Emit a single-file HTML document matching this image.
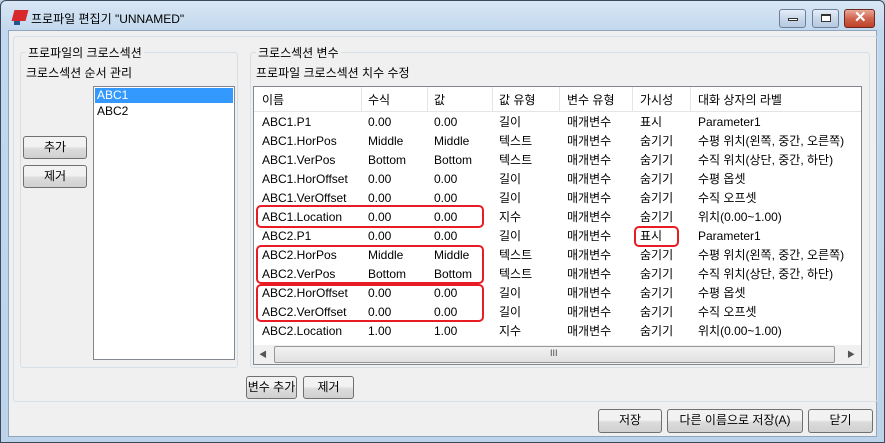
<!DOCTYPE html>
<html><head><meta charset="utf-8"><style>
*{box-sizing:border-box;margin:0;padding:0}
body{width:885px;height:443px;overflow:hidden;background:#bcd3ea;font-family:"Liberation Sans","Noto Sans CJK KR",sans-serif;font-size:12px;color:#000;position:relative}
.a{position:absolute}
.win{left:0;top:0;width:885px;height:443px;border:1px solid #3a4a5c;border-radius:6px 6px 0 0;background:linear-gradient(#d9e6f4,#c2d8ee 30px,#bcd3ea)}
.body{left:8px;top:30px;width:869px;height:407px;background:#f0f0f0;border:1px solid #8fa6bf}
.grp{border:1px solid #d5dfe5;border-radius:3px}
.lbl{background:#f0f0f0;padding:0 2px;white-space:nowrap}
.btn{border:1px solid #707070;border-radius:3px;background:linear-gradient(#f2f2f2 45%,#dcdcdc 55%,#d0d0d0);text-align:center;line-height:20px;white-space:nowrap}
.tb{top:9px;height:19px;border:1px solid #6b7f99;border-radius:3px;background:linear-gradient(#e6eef8,#c9d8ea 50%,#b6c9e0)}
.row{position:absolute;left:0;height:19px;line-height:19px;white-space:nowrap;width:608px}
.row span{position:absolute}
.red{position:absolute;border:2px solid #e81c24;border-radius:5px}
</style></head><body>
<div class="a win"></div>
<div class="a" style="left:13px;top:10px;width:14px;height:11px;background:#d8282c;transform:skewX(-15deg)"></div>
<div class="a" style="left:14px;top:21px;width:6px;height:4px;background:#24568f"></div>
<div class="a" style="left:31px;top:10px;font-size:12px">프로파일 편집기  "UNNAMED"</div>
<div class="a tb" style="left:779px;width:27px"><div class="a" style="left:8px;top:8px;width:10px;height:3px;border:1px solid #333;background:#fff"></div></div>
<div class="a tb" style="left:812px;width:27px"><div class="a" style="left:8px;top:4px;width:10px;height:8px;border:1px solid #333;border-top-width:2px;background:#fff"></div></div>
<div class="a tb" style="left:844px;width:31px;border-color:#6b2a20;background:linear-gradient(#e8a898,#d0644e 50%,#c04028)"><div class="a" style="left:9px;top:-2px;color:#fff;font-size:15px;font-weight:bold">✕</div></div>
<div class="a body"></div>
<div class="a grp" style="left:13px;top:36px;width:865px;height:366px"></div>
<div class="a grp" style="left:20px;top:52px;width:218px;height:316px"></div>
<div class="a lbl" style="left:26px;top:44px">프로파일의 크로스섹션</div>
<div class="a" style="left:26px;top:64px">크로스섹션 순서 관리</div>
<div class="a" style="left:93px;top:86px;width:142px;height:274px;background:#fff;border:1px solid #828790"></div>
<div class="a" style="left:95px;top:88px;width:138px;height:15px;background:#3399ff;color:#fff;padding-left:2px;line-height:15px">ABC1</div>
<div class="a" style="left:97px;top:104px">ABC2</div>
<div class="a btn" style="left:23px;top:136px;width:64px;height:23px">추가</div>
<div class="a btn" style="left:23px;top:165px;width:64px;height:23px">제거</div>
<div class="a grp" style="left:250px;top:52px;width:620px;height:316px"></div>
<div class="a lbl" style="left:256px;top:44px">크로스섹션 변수</div>
<div class="a" style="left:256px;top:64px">프로파일 크로스섹션 치수 수정</div>
<div class="a" style="left:253px;top:86px;width:609px;height:279px;background:#fff;border:1px solid #828790;overflow:hidden">
<div class="a" style="left:0;top:0;width:608px;height:25px;border-bottom:1px solid #e5e5e5;background:#fff"></div>
<div class="row" style="top:4px"><span style="left:8px">이름</span><span style="left:114px">수식</span><span style="left:180px">값</span><span style="left:245px">값 유형</span><span style="left:313px">변수 유형</span><span style="left:386px">가시성</span><span style="left:444px">대화 상자의 라벨</span></div>
<div class="a" style="left:107px;top:0;width:1px;height:25px;background:#e5e5e5"></div>
<div class="a" style="left:173px;top:0;width:1px;height:25px;background:#e5e5e5"></div>
<div class="a" style="left:238px;top:0;width:1px;height:25px;background:#e5e5e5"></div>
<div class="a" style="left:305px;top:0;width:1px;height:25px;background:#e5e5e5"></div>
<div class="a" style="left:378px;top:0;width:1px;height:25px;background:#e5e5e5"></div>
<div class="a" style="left:436px;top:0;width:1px;height:25px;background:#e5e5e5"></div>
<div class="row" style="top:26px"><span style="left:8px">ABC1.P1</span><span style="left:114px">0.00</span><span style="left:180px">0.00</span><span style="left:245px">길이</span><span style="left:313px">매개변수</span><span style="left:386px">표시</span><span style="left:444px">Parameter1</span></div>
<div class="row" style="top:45px"><span style="left:8px">ABC1.HorPos</span><span style="left:114px">Middle</span><span style="left:180px">Middle</span><span style="left:245px">텍스트</span><span style="left:313px">매개변수</span><span style="left:386px">숨기기</span><span style="left:444px">수평 위치(왼쪽, 중간, 오른쪽)</span></div>
<div class="row" style="top:64px"><span style="left:8px">ABC1.VerPos</span><span style="left:114px">Bottom</span><span style="left:180px">Bottom</span><span style="left:245px">텍스트</span><span style="left:313px">매개변수</span><span style="left:386px">숨기기</span><span style="left:444px">수직 위치(상단, 중간, 하단)</span></div>
<div class="row" style="top:83px"><span style="left:8px">ABC1.HorOffset</span><span style="left:114px">0.00</span><span style="left:180px">0.00</span><span style="left:245px">길이</span><span style="left:313px">매개변수</span><span style="left:386px">숨기기</span><span style="left:444px">수평 옵셋</span></div>
<div class="row" style="top:102px"><span style="left:8px">ABC1.VerOffset</span><span style="left:114px">0.00</span><span style="left:180px">0.00</span><span style="left:245px">길이</span><span style="left:313px">매개변수</span><span style="left:386px">숨기기</span><span style="left:444px">수직 오프셋</span></div>
<div class="row" style="top:121px"><span style="left:8px">ABC1.Location</span><span style="left:114px">0.00</span><span style="left:180px">0.00</span><span style="left:245px">지수</span><span style="left:313px">매개변수</span><span style="left:386px">숨기기</span><span style="left:444px">위치(0.00~1.00)</span></div>
<div class="row" style="top:140px"><span style="left:8px">ABC2.P1</span><span style="left:114px">0.00</span><span style="left:180px">0.00</span><span style="left:245px">길이</span><span style="left:313px">매개변수</span><span style="left:386px">표시</span><span style="left:444px">Parameter1</span></div>
<div class="row" style="top:159px"><span style="left:8px">ABC2.HorPos</span><span style="left:114px">Middle</span><span style="left:180px">Middle</span><span style="left:245px">텍스트</span><span style="left:313px">매개변수</span><span style="left:386px">숨기기</span><span style="left:444px">수평 위치(왼쪽, 중간, 오른쪽)</span></div>
<div class="row" style="top:178px"><span style="left:8px">ABC2.VerPos</span><span style="left:114px">Bottom</span><span style="left:180px">Bottom</span><span style="left:245px">텍스트</span><span style="left:313px">매개변수</span><span style="left:386px">숨기기</span><span style="left:444px">수직 위치(상단, 중간, 하단)</span></div>
<div class="row" style="top:197px"><span style="left:8px">ABC2.HorOffset</span><span style="left:114px">0.00</span><span style="left:180px">0.00</span><span style="left:245px">길이</span><span style="left:313px">매개변수</span><span style="left:386px">숨기기</span><span style="left:444px">수평 옵셋</span></div>
<div class="row" style="top:216px"><span style="left:8px">ABC2.VerOffset</span><span style="left:114px">0.00</span><span style="left:180px">0.00</span><span style="left:245px">길이</span><span style="left:313px">매개변수</span><span style="left:386px">숨기기</span><span style="left:444px">수직 오프셋</span></div>
<div class="row" style="top:235px"><span style="left:8px">ABC2.Location</span><span style="left:114px">1.00</span><span style="left:180px">1.00</span><span style="left:245px">지수</span><span style="left:313px">매개변수</span><span style="left:386px">숨기기</span><span style="left:444px">위치(0.00~1.00)</span></div>
<div class="a" style="left:0;top:258px;width:608px;height:19px;background:#f0f0f0"></div>
<div class="a" style="left:5px;top:262px;font-size:8px;color:#555">◀</div>
<div class="a" style="left:20px;top:259px;width:561px;height:17px;border:1px solid #979797;border-radius:2px;background:linear-gradient(#f2f2f2,#e0e0e0)"></div>
<div class="a" style="left:296px;top:261px;font-size:9px;color:#444">III</div>
<div class="a" style="left:593px;top:262px;font-size:8px;color:#555">▶</div>
</div>
<div class="red" style="left:256px;top:205px;width:228px;height:23px"></div>
<div class="red" style="left:634px;top:226px;width:45px;height:21px"></div>
<div class="red" style="left:256px;top:245px;width:228px;height:39px"></div>
<div class="red" style="left:256px;top:284px;width:228px;height:38px"></div>
<div class="a btn" style="left:246px;top:376px;width:51px;height:23px">변수 추가</div>
<div class="a btn" style="left:303px;top:376px;width:51px;height:23px">제거</div>
<div class="a btn" style="left:598px;top:409px;width:64px;height:24px">저장</div>
<div class="a btn" style="left:667px;top:409px;width:136px;height:24px">다른 이름으로 저장(A)</div>
<div class="a btn" style="left:808px;top:409px;width:65px;height:24px">닫기</div>
</body></html>
